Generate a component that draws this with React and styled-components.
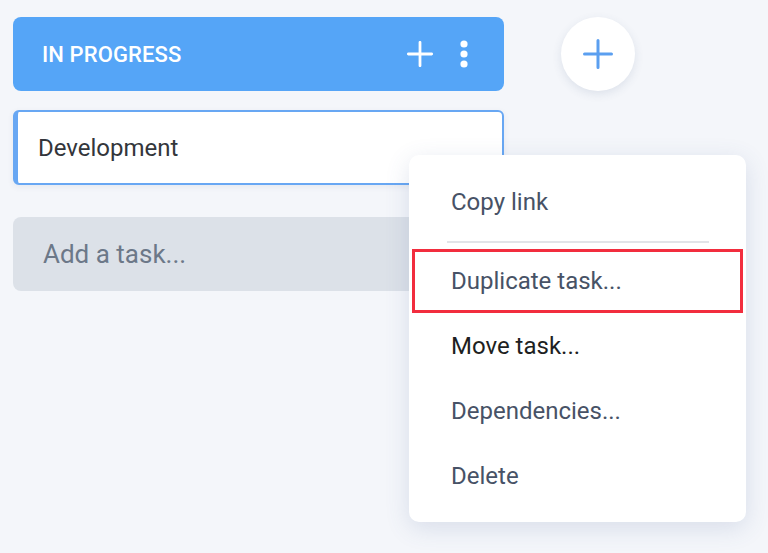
import React from 'react';
import styled, { createGlobalStyle } from 'styled-components';

const GlobalStyle = createGlobalStyle`
  html, body {
    margin: 0;
    padding: 0;
    background: #f4f6fa;
    font-family: Roboto, "Noto Sans", Arial, sans-serif;
  }
`;

const Board = styled.div`
  position: relative;
  display: flex;
  align-items: flex-start;
  gap: 57px;
  padding: 17px 13px;
  width: 768px;
  height: 553px;
  box-sizing: border-box;
  overflow: hidden;
`;

const Column = styled.div`
  width: 491px;
  display: flex;
  flex-direction: column;
`;

const ColumnHeader = styled.div`
  height: 74px;
  border-radius: 8px;
  background: #55a5f7;
  display: flex;
  align-items: center;
  padding: 0 35px 0 29px;
  box-sizing: border-box;
  color: #fff;
`;

const ColumnTitle = styled.div`
  flex: 1;
  font-size: 22px;
  font-weight: 500;
  letter-spacing: 0.1px;
`;

const HeaderActions = styled.div`
  display: flex;
  align-items: center;
  gap: 26px;
`;

const IconButton = styled.button`
  border: none;
  background: none;
  padding: 0;
  display: flex;
  align-items: center;
  justify-content: center;
  color: inherit;
  cursor: pointer;
`;

const TaskCard = styled.div`
  margin-top: 19px;
  height: 75px;
  background: #fff;
  border: 2px solid #68a7f3;
  border-left-width: 5px;
  border-radius: 6px;
  box-sizing: border-box;
  display: flex;
  align-items: center;
  padding-left: 20px;
  font-size: 24px;
  color: #33363b;
  box-shadow: 0 2px 6px rgba(60, 80, 120, 0.08);
`;

const AddTask = styled.div`
  margin-top: 32px;
  height: 74px;
  background: #dce1e8;
  border-radius: 8px;
  display: flex;
  align-items: center;
  padding-left: 30px;
  font-size: 26px;
  color: #6c7888;
`;

const AddColumnButton = styled.button`
  width: 74px;
  height: 74px;
  border-radius: 50%;
  border: none;
  background: #fff;
  box-shadow: 0 3px 10px rgba(60, 80, 120, 0.12);
  display: flex;
  align-items: center;
  justify-content: center;
  color: #5b9ff0;
  cursor: pointer;
`;

const Menu = styled.div`
  position: absolute;
  left: 409px;
  top: 155px;
  width: 337px;
  padding: 14px 0;
  background: #fff;
  border-radius: 10px;
  box-shadow: 0 6px 24px rgba(70, 95, 150, 0.16);
  box-sizing: border-box;
`;

const MenuItem = styled.div`
  height: ${(p) => (p.$highlighted ? 64 : 65)}px;
  display: flex;
  align-items: center;
  padding-left: ${(p) => (p.$highlighted ? 36 : 42)}px;
  margin: ${(p) => (p.$highlighted ? '0 3px' : '0')};
  border: ${(p) => (p.$highlighted ? '3px solid #f22d3e' : 'none')};
  font-size: 24px;
  color: ${(p) => (p.$dark ? '#1e1f22' : '#475266')};
  box-sizing: border-box;
`;

const Divider = styled.div`
  height: 2px;
  background: #e2e4e8;
  margin: 7px 37px 6px 38px;
`;

function PlusIcon({ size, stroke }) {
  return (
    <svg width={size} height={size} viewBox="0 0 30 30" fill="none">
      <path
        d="M15 1.5v27M1.5 15h27"
        stroke="currentColor"
        strokeWidth={stroke}
        strokeLinecap="round"
      />
    </svg>
  );
}

function KebabIcon() {
  return (
    <svg width="10" height="28" viewBox="0 0 10 28" fill="currentColor">
      <circle cx="5" cy="4" r="3.6" />
      <circle cx="5" cy="14" r="3.6" />
      <circle cx="5" cy="24" r="3.6" />
    </svg>
  );
}

export default function App() {
  return (
    <>
      <GlobalStyle />
      <Board>
        <Column>
          <ColumnHeader>
            <ColumnTitle>IN PROGRESS</ColumnTitle>
            <HeaderActions>
              <IconButton>
                <PlusIcon size={26} stroke={3.2} />
              </IconButton>
              <IconButton>
                <KebabIcon />
              </IconButton>
            </HeaderActions>
          </ColumnHeader>
          <TaskCard>Development</TaskCard>
          <AddTask>Add a task...</AddTask>
        </Column>
        <AddColumnButton>
          <PlusIcon size={30} stroke={3} />
        </AddColumnButton>
        <Menu>
          <MenuItem>Copy link</MenuItem>
          <Divider />
          <MenuItem $highlighted>Duplicate task...</MenuItem>
          <MenuItem $dark>Move task...</MenuItem>
          <MenuItem>Dependencies...</MenuItem>
          <MenuItem>Delete</MenuItem>
        </Menu>
      </Board>
    </>
  );
}
